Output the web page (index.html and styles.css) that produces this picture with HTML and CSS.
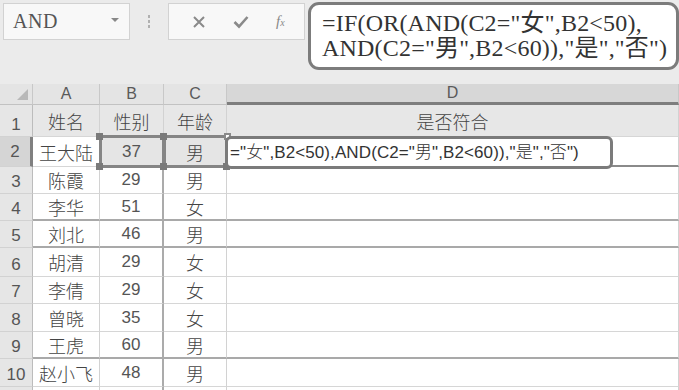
FILE: index.html
```html
<!DOCTYPE html>
<html lang="zh-CN">
<head>
  <meta charset="UTF-8">
  <title>是否符合</title>
  <link rel="stylesheet" href="styles.css">
</head>
<body>

  <div class="toolbar">
    <div class="namebox">
      <span class="name">AND</span>
      <span class="caret"></span>
    </div>
    <div class="grip"><i></i><i></i><i></i></div>
    <div class="fxbtns">
      <svg width="14" height="14" viewBox="0 0 14 14"><path d="M2 2 L12 12 M12 2 L2 12" stroke="#8a8a8a" stroke-width="2" fill="none"/></svg>
      <svg width="16" height="14" viewBox="0 0 16 14"><path d="M1.5 7 L6 11.5 L14.5 2" stroke="#8a8a8a" stroke-width="2.6" fill="none"/></svg>
      <span class="fx"><i>f</i><small>x</small></span>
    </div>
    <div class="formula">
      <div class="fline">=IF(OR(AND(C2="女",B2&lt;50),</div>
      <div class="fline">AND(C2="男",B2&lt;60)),"是","否")</div>
    </div>
  </div>

  <div class="sheet">
    <!-- column headers -->
    <div class="h corner"></div>
    <div class="h">A</div>
    <div class="h">B</div>
    <div class="h">C</div>
    <div class="h on">D</div>

    <!-- row 1 -->
    <div class="rh">1</div>
    <div class="c head">姓名</div>
    <div class="c head">性别</div>
    <div class="c head">年龄</div>
    <div class="c head">是否符合</div>

    <!-- row 2 -->
    <div class="rh sel">2</div>
    <div class="c">王大陆</div>
    <div class="c num ref">37
      <span class="hd tl"></span><span class="hd tr"></span><span class="hd bl"></span><span class="hd br"></span>
    </div>
    <div class="c ref">男
      <span class="hd tr hollow"></span><span class="hd br"></span>
    </div>
    <div class="c d2"><div class="edit">="女",B2&lt;50),AND(C2="男",B2&lt;60)),"是","否")</div></div>

    <div class="rh">3</div>
    <div class="c">陈霞</div>
    <div class="c num bc">29</div>
    <div class="c">男</div>
    <div class="c"></div>

    <div class="rh">4</div>
    <div class="c thick">李华</div>
    <div class="c num bc thick">51</div>
    <div class="c thick">女</div>
    <div class="c thick"></div>

    <div class="rh">5</div>
    <div class="c thick">刘北</div>
    <div class="c num bc thick">46</div>
    <div class="c thick">男</div>
    <div class="c thick"></div>

    <div class="rh">6</div>
    <div class="c">胡清</div>
    <div class="c num bc">29</div>
    <div class="c">女</div>
    <div class="c"></div>

    <div class="rh">7</div>
    <div class="c">李倩</div>
    <div class="c num bc">29</div>
    <div class="c">女</div>
    <div class="c"></div>

    <div class="rh">8</div>
    <div class="c">曾晓</div>
    <div class="c num bc">35</div>
    <div class="c">女</div>
    <div class="c"></div>

    <div class="rh">9</div>
    <div class="c thick">王虎</div>
    <div class="c num bc thick">60</div>
    <div class="c thick">男</div>
    <div class="c thick"></div>

    <div class="rh">10</div>
    <div class="c">赵小飞</div>
    <div class="c num bc">48</div>
    <div class="c">男</div>
    <div class="c"></div>

    <div class="rh"></div>
    <div class="c"></div>
    <div class="c bc"></div>
    <div class="c"></div>
    <div class="c"></div>
  </div>

</body>
</html>
```

FILE: styles.css
```css
body {
  margin: 0;
  width: 679px;
  height: 390px;
  overflow: hidden;
  background: #fff;
  font-family: "Liberation Sans", "Noto Sans CJK SC", sans-serif;
  color: #3a3a3a;
}

/* formula bar */
.toolbar {
  display: flex;
  align-items: flex-start;
  height: 84px;
  padding: 3px 0 0 3px;
  box-sizing: border-box;
  background: #ebebeb;
}
.namebox {
  width: 127px;
  height: 37px;
  box-sizing: border-box;
  border: 1px solid #d2d2d2;
  background: #f8f8f8;
  display: flex;
  align-items: center;
  justify-content: space-between;
  padding: 0 10px 0 9px;
}
.name {
  font-family: "Liberation Serif", serif;
  font-size: 20px;
  letter-spacing: 0.5px;
  color: #555;
}
.caret {
  width: 0;
  height: 0;
  border-left: 4px solid transparent;
  border-right: 4px solid transparent;
  border-top: 4px solid #888;
  margin-top: -4px;
}
.grip {
  width: 38px;
  height: 37px;
  display: flex;
  flex-direction: column;
  align-items: center;
  justify-content: center;
  gap: 2px;
}
.grip i {
  width: 2px;
  height: 3px;
  background: #b0b0b0;
}
.fxbtns {
  width: 137px;
  height: 37px;
  box-sizing: border-box;
  border: 1px solid #d2d2d2;
  background: #f8f8f8;
  display: flex;
  align-items: center;
  justify-content: space-around;
  padding: 0 6px 0 10px;
}
.fx {
  font-family: "Liberation Serif", serif;
  color: #888;
  font-size: 15px;
}
.fx small {
  font-size: 10px;
  font-style: italic;
}
.formula {
  margin: -1px 0 0 3px;
  width: 371px;
  height: 68px;
  box-sizing: border-box;
  border: 3px solid #7c7c7c;
  border-radius: 11px;
  background: #fff;
  padding: 6px 0 0 11px;
  font-family: "Liberation Serif", "Noto Sans CJK SC", serif;
  font-size: 24px;
  letter-spacing: 0.2px;
  color: #333;
  white-space: nowrap;
  overflow: hidden;
}
.fline {
  height: 25px;
  line-height: 25px;
}

/* sheet grid */
.sheet {
  display: grid;
  grid-template-columns: 33px 67px 64px 63px 1fr;
  grid-template-rows: 21px 32px 30px 27px 27px 27px 29px 27px 28px 27px 28px 10px;
}
.sheet > div {
  box-sizing: border-box;
}
.h {
  background: #e4e4e4;
  border-right: 1px solid #c8c8c8;
  border-bottom: 1px solid #c2c2c2;
  display: flex;
  align-items: center;
  justify-content: center;
  font-size: 16px;
  color: #5a5a5a;
}
.h.on {
  background: #d7d7d7;
  border-bottom: 3px solid #7e7e7e;
}
.corner {
  position: relative;
}
.corner::after {
  content: "";
  position: absolute;
  right: 4px;
  bottom: 4px;
  width: 11px;
  height: 11px;
  background: #b8b8b8;
  clip-path: polygon(100% 0, 100% 100%, 0 100%);
}
.rh {
  background: #e6e6e6;
  border-right: 1px solid #bcbcbc;
  border-bottom: 1px solid #d2d2d2;
  display: flex;
  align-items: flex-end;
  justify-content: center;
  padding-bottom: 1px;
  font-size: 17px;
  color: #555;
}
.rh.sel {
  background: #d5d5d5;
  border-right: 3px solid #808080;
  align-items: center;
  padding-bottom: 0;
}
.c {
  border-right: 1px solid #d2d2d2;
  border-bottom: 1px solid #d6d6d6;
  display: flex;
  align-items: center;
  justify-content: center;
  font-family: "Noto Sans CJK SC", sans-serif;
  font-size: 18px;
  font-weight: 300;
  color: #444;
  white-space: nowrap;
}
.c.num {
  font-family: "Liberation Sans", sans-serif;
  font-size: 17px;
  font-weight: 400;
  color: #555;
}
.c.head {
  background: #e7e7e7;
}
.c.bc {
  border-right: 2px solid #ababab;
}
.c.thick {
  border-bottom: 2px solid #a9a9a9;
}

/* formula reference highlight on B2:C2 */
.ref {
  position: relative;
  background: #e5e5e5;
}
.ref::before {
  content: "";
  position: absolute;
  top: -2px;
  left: -1px;
  right: -2px;
  bottom: -2px;
  border: 3px solid #858585;
}
.hd {
  position: absolute;
  width: 7px;
  height: 7px;
  background: #7a7a7a;
  z-index: 2;
}
.hd.tl { left: -4px; top: -4px; }
.hd.tr { right: -4px; top: -4px; }
.hd.bl { left: -4px; bottom: -4px; }
.hd.br { right: -4px; bottom: -4px; }
.hd.hollow {
  background: #fff;
  border: 2px solid #8a8a8a;
  box-sizing: border-box;
  right: -5px;
}

/* in-cell editor on D2 */
.d2 {
  position: relative;
  border-bottom: 2px solid #8a8a8a;
}
.edit {
  position: absolute;
  left: -2px;
  top: -1px;
  width: 388px;
  height: 33px;
  box-sizing: border-box;
  border: 3px solid #7b7b7b;
  border-radius: 6px;
  background: #fff;
  padding-left: 2px;
  font-family: "Liberation Sans", "Noto Sans CJK SC", sans-serif;
  font-size: 17px;
  font-weight: 300;
  line-height: 27px;
  letter-spacing: 0.1px;
  color: #333;
  white-space: nowrap;
  z-index: 3;
}
```
